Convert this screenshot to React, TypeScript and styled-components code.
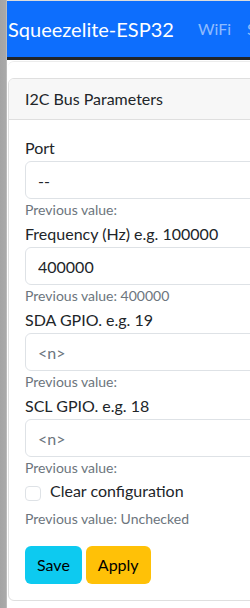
import React from 'react';
import styled, { createGlobalStyle } from 'styled-components';

const GlobalStyle = createGlobalStyle`
  html, body {
    margin: 0;
    padding: 0;
    background: #ffffff;
    overflow: hidden;
  }
  body {
    font-family: Lato, "Open Sans", sans-serif;
    font-size: 16px;
    color: #212529;
  }
`;

const Page = styled.div`
  display: flex;
  width: 640px;
  min-height: 608px;
`;

const LeftStrip = styled.div`
  width: 7px;
  flex-shrink: 0;
  background: linear-gradient(to right, #a4a4a4 0%, #a9a9a9 80%, #c4c4c4 100%);
`;

const Main = styled.div`
  flex: 1;
  display: flex;
  flex-direction: column;
  border-top: 1px solid #dcdcdc;
`;

const Navbar = styled.nav`
  height: 56px;
  background: #0d6efd;
  border-bottom: 3px solid #212529;
  display: flex;
  align-items: center;
  padding-left: 1px;
`;

const Brand = styled.span`
  font-size: 20px;
  line-height: 30px;
  color: #ffffff;
  margin-right: 16px;
  white-space: nowrap;
`;

const NavLink = styled.span`
  padding: 8px;
  font-size: 16px;
  line-height: 24px;
  color: rgba(255, 255, 255, 0.55);
`;

const Pane = styled.div`
  margin-top: 1px;
  border-top: 1px solid #ececec;
  border-top-left-radius: 6px;
  margin-left: 1px;
  padding-top: 16px;
`;

const Card = styled.div`
  border: 1px solid #dfdfdf;
  border-radius: 6px;
  overflow: hidden;
`;

const CardHeader = styled.div`
  background: #f7f7f7;
  border-bottom: 1px solid #dfdfdf;
  padding: 8px 16px;
  line-height: 24px;
`;

const CardBody = styled.div`
  padding: 16px;
  display: flex;
  flex-direction: column;
`;

const Field = styled.div`
  margin-bottom: 2px;
`;

const Label = styled.label`
  display: block;
  line-height: 24px;
  margin-bottom: 1px;
`;

const Input = styled.input`
  box-sizing: border-box;
  width: 100%;
  height: 38px;
  padding: 6px 12px;
  border: 1px solid #dee2e6;
  border-radius: 6px;
  font-family: inherit;
  font-size: 16px;
  color: #212529;
  background: #ffffff;
  &::placeholder {
    color: #6c757d;
  }
`;

const FormText = styled.div<{ $gap?: number }>`
  font-size: 14px;
  line-height: 21px;
  color: #6c757d;
  margin-top: ${({ $gap }) => $gap ?? 0}px;
`;

const CheckRow = styled.label`
  display: flex;
  align-items: flex-start;
  gap: 9px;
  line-height: 24px;
  margin-top: -1px;
`;

const CheckBox = styled.span`
  box-sizing: border-box;
  width: 16px;
  height: 15px;
  margin-top: 7px;
  border: 1px solid #dee2e6;
  border-radius: 4px;
  background: #ffffff;
`;

const Buttons = styled.div`
  display: flex;
  gap: 4px;
  margin-top: 17px;
`;

const Button = styled.button<{ $bg: string }>`
  height: 38px;
  padding: 6px 12px;
  border: none;
  border-radius: 6px;
  background: ${({ $bg }) => $bg};
  color: #000000;
  font-family: inherit;
  font-size: 16px;
  line-height: 24px;
`;

const fields = [
  { label: 'Port', value: '--', placeholder: '', prev: 'Previous value:' },
  { label: 'Frequency (Hz) e.g. 100000', value: '400000', placeholder: '', prev: 'Previous value: 400000' },
  { label: 'SDA GPIO. e.g. 19', value: '', placeholder: '<n>', prev: 'Previous value:' },
  { label: 'SCL GPIO. e.g. 18', value: '', placeholder: '<n>', prev: 'Previous value:' },
];

const App: React.FC = () => {
  return (
    <>
      <GlobalStyle />
      <Page>
        <LeftStrip />
        <Main>
          <Navbar>
            <Brand>Squeezelite-ESP32</Brand>
            <NavLink>WiFi</NavLink>
            <NavLink>Services</NavLink>
          </Navbar>
          <Pane>
            <Card>
              <CardHeader>I2C Bus Parameters</CardHeader>
              <CardBody>
                {fields.map((f) => (
                  <Field key={f.label}>
                    <Label>{f.label}</Label>
                    <Input defaultValue={f.value} placeholder={f.placeholder} />
                    <FormText>{f.prev}</FormText>
                  </Field>
                ))}
                <CheckRow>
                  <CheckBox />
                  Clear configuration
                </CheckRow>
                <FormText $gap={5}>Previous value: Unchecked</FormText>
                <Buttons>
                  <Button $bg="#0dcaf0">Save</Button>
                  <Button $bg="#ffc107">Apply</Button>
                </Buttons>
              </CardBody>
            </Card>
          </Pane>
        </Main>
      </Page>
    </>
  );
};

export default App;
